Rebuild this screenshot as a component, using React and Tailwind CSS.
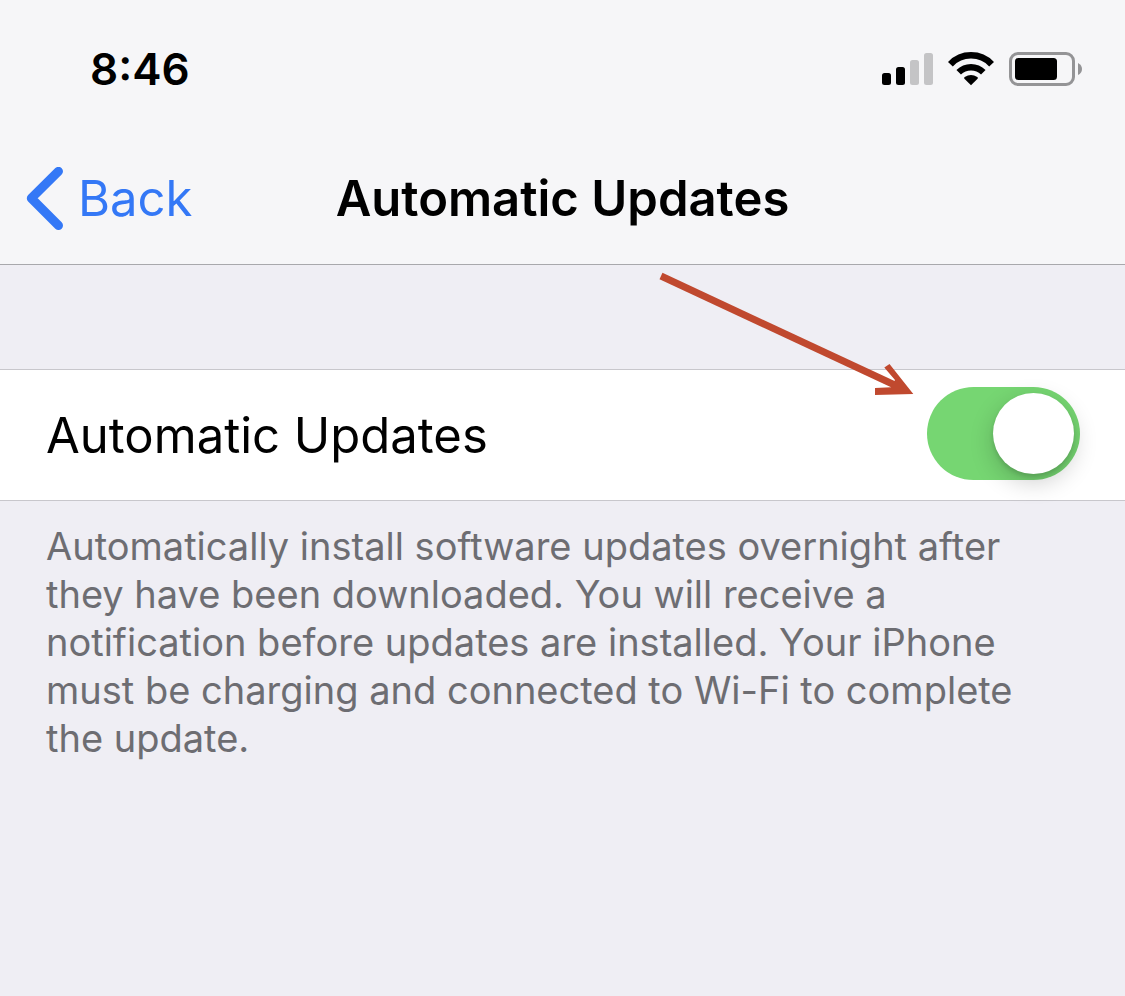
import { useState } from "react";

const SignalIcon = () => (
  <svg width="51" height="32" viewBox="0 0 51 32" role="img" aria-label="Signal strength">
    <rect x="0" y="20" width="9" height="12" rx="2.5" fill="#000" />
    <rect x="14" y="14" width="9" height="18" rx="2.5" fill="#000" />
    <rect x="28" y="7" width="9" height="25" rx="2.5" fill="#c4c4c6" />
    <rect x="42" y="0" width="9" height="32" rx="2.5" fill="#c4c4c6" />
  </svg>
);

const WifiIcon = () => (
  <svg width="46" height="34" viewBox="0 0 46 34" role="img" aria-label="Wi-Fi">
    <path d="M2.4 12.2a28.3 28.3 0 0 1 41.2 0" fill="none" stroke="#000" strokeWidth="6.6" />
    <path d="M10.7 20.3a17.4 17.4 0 0 1 24.6 0" fill="none" stroke="#000" strokeWidth="6.4" />
    <path d="M23 33.2 16.4 26.7q-.7-.9.3-1.6a11 11 0 0 1 12.6 0q1 .7.3 1.6z" fill="#000" />
  </svg>
);

const BatteryIcon = () => (
  <svg width="74" height="34" viewBox="0 0 74 34" role="img" aria-label="Battery">
    <rect x="1.5" y="1.5" width="63" height="31" rx="7.5" fill="none" stroke="#949496" strokeWidth="3" />
    <rect x="6" y="6" width="42" height="22" rx="3.5" fill="#000" />
    <path d="M69 11q4 2 4 6t-4 6z" fill="#949496" />
  </svg>
);

const App = () => {
  const [enabled, setEnabled] = useState(true);

  return (
    <div className="min-h-screen bg-[#efeef4] font-[Inter,sans-serif] text-black">

      {/* Header */}
      <header className="border-b border-[#a8a8ac] bg-[#f6f6f8]">
        <div className="flex items-center justify-between pt-[39px] pr-[42px] pl-[90px]">
          <time className="text-[44px] leading-[60px] font-semibold">8:46</time>
          <div className="flex items-center gap-[15px]">
            <SignalIcon />
            <WifiIcon />
            <BatteryIcon />
          </div>
        </div>

        <nav className="grid grid-cols-[1fr_auto_1fr] items-center pt-[66px] pb-[31px]">
          <a href="#settings" className="flex items-center gap-[14px] pl-[26px] text-[49px] leading-[68px] text-[#3478f6]">
            <svg width="38" height="64" viewBox="0 0 38 64" fill="none" aria-hidden="true">
              <path d="M32.5 4.3 5.3 31.3l27.2 27.2" stroke="currentColor" strokeWidth="9" strokeLinecap="round" strokeLinejoin="round" />
            </svg>
            Back
          </a>
          <h1 className="text-[49px] leading-[68px] font-semibold">Automatic Updates</h1>
        </nav>
      </header>

      {/* Setting row */}
      <main className="pt-[104px]">
        <div className="relative flex items-end justify-between border-y border-[#c8c7cc] bg-white pt-[17px] pr-[45px] pb-5 pl-[46px]">
          <label htmlFor="auto-updates" className="text-[49px] leading-[88px]">
            Automatic Updates
          </label>
          <input
            id="auto-updates"
            type="checkbox"
            role="switch"
            checked={enabled}
            onChange={(e) => setEnabled(e.target.checked)}
            aria-describedby="auto-updates-info"
            className="h-[93px] w-[153px] shrink-0 cursor-pointer appearance-none rounded-full bg-[#e5e5ea] p-[6px] transition before:block before:size-[81px] before:rounded-full before:bg-white before:shadow-[0_8px_24px_rgba(0,0,0,0.2),0_3px_4px_rgba(0,0,0,0.12)] before:transition checked:bg-[#76d672] checked:before:translate-x-[60px]"
          />

          {/* Arrow pointing at the switch */}
          <svg
            className="pointer-events-none absolute -top-[100px] right-[210px]"
            width="260"
            height="130"
            viewBox="0 0 260 130"
            fill="none"
            aria-hidden="true"
          >
            <path d="M6 6 244 117" stroke="#c0492f" strokeWidth="7" />
            <path d="M258.3 124 220 125V118L236 117.3 240 110 229.3 97.5 234.5 94z" fill="#c0492f" />
          </svg>
        </div>

        <p id="auto-updates-info" className="pt-[21px] pr-20 pl-[46px] text-[38px] leading-[48px] text-[#6d6d72]">
          Automatically install software updates overnight after they have been downloaded. You will receive a
          notification before updates are installed. Your iPhone must be charging and connected to Wi-Fi to complete
          the update.
        </p>
      </main>
    </div>
  );
};

export default App;
